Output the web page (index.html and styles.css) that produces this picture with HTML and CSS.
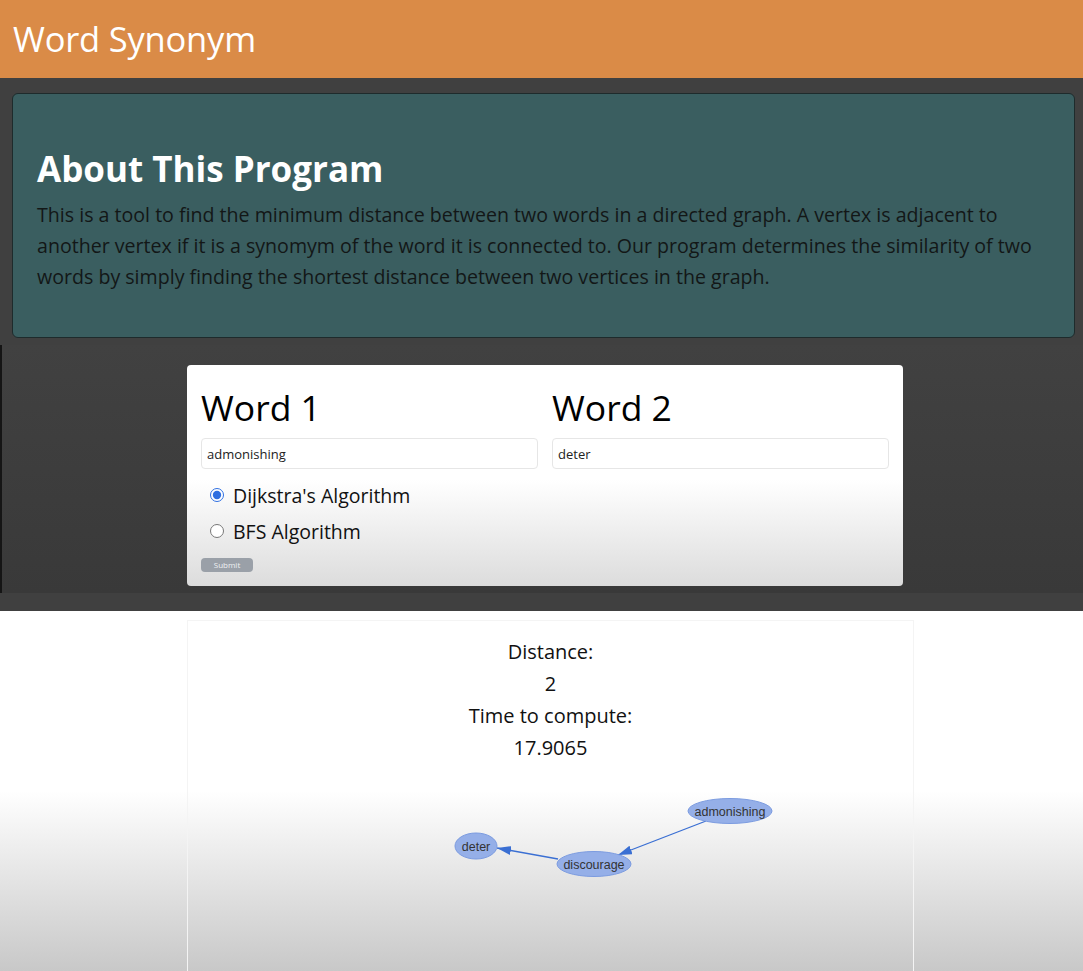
FILE: index.html
```html
<!DOCTYPE html>
<html lang="en">
<head>
<meta charset="utf-8">
<title>Word Synonym</title>
<link rel="stylesheet" href="styles.css">
</head>
<body>
<header class="topbar"><h1 class="brand">Word Synonym</h1></header>
<section class="about">
  <h2 class="about-title">About This Program</h2>
  <p class="about-text">This is a tool to find the minimum distance between two words in a directed graph. A vertex is adjacent to another vertex if it is a synomym of the word it is connected to. Our program determines the similarity of two words by simply finding the shortest distance between two vertices in the graph.</p>
</section>
<section class="panel">
  <form class="card">
    <div class="cols">
      <div class="col">
        <h3 class="word-label">Word 1</h3>
        <input class="word-input" type="text" value="admonishing">
      </div>
      <div class="col">
        <h3 class="word-label">Word 2</h3>
        <input class="word-input" type="text" value="deter">
      </div>
    </div>
    <label class="radio-row"><input type="radio" name="alg" checked> <span>Dijkstra's Algorithm</span></label>
    <label class="radio-row"><input type="radio" name="alg"> <span>BFS Algorithm</span></label>
    <button class="submit" type="button">Submit</button>
  </form>
</section>
<section class="results">
  <div class="result-card">
    <div class="stat">Distance:</div>
    <div class="stat">2</div>
    <div class="stat">Time to compute:</div>
    <div class="stat">17.9065</div>
    <svg class="graph" width="727" height="140" viewBox="0 0 727 140">
      <defs>
        <marker id="arr" markerWidth="14" markerHeight="9" refX="14" refY="4.5" orient="auto" markerUnits="userSpaceOnUse">
          <path d="M0,0 L14,4.5 L0,9 Z" fill="#3a6fd3"/>
        </marker>
      </defs>
      <line x1="518" y1="46" x2="430" y2="80" stroke="#3a6fd3" stroke-width="1.3" marker-end="url(#arr)"/>
      <line x1="370" y1="84" x2="309" y2="73" stroke="#3a6fd3" stroke-width="1.3" marker-end="url(#arr)"/>
      <ellipse cx="542" cy="36" rx="42" ry="12.5" fill="#95afe8" stroke="#7b9be0"/>
      <ellipse cx="406" cy="89" rx="37" ry="12.5" fill="#95afe8" stroke="#7b9be0"/>
      <ellipse cx="288" cy="71" rx="21" ry="13" fill="#95afe8" stroke="#7b9be0"/>
      <text x="542" y="40.5" class="node-text">admonishing</text>
      <text x="406" y="93.5" class="node-text">discourage</text>
      <text x="288" y="75.5" class="node-text">deter</text>
    </svg>
  </div>
</section>
</body>
</html>
```
FILE: styles.css
```css
* { box-sizing: border-box; }
html, body { margin: 0; padding: 0; }
body {
  background: #404040;
  font-family: "Open Sans", "Noto Sans", sans-serif;
  width: 1083px;
  overflow: hidden;
}
.topbar {
  height: 78px;
  background: #da8b47;
  padding-left: 13px;
}
.brand {
  margin: 0;
  color: #fff;
  font-size: 34.5px;
  font-weight: 400;
  line-height: 78px;
  letter-spacing: -0.2px;
}
.about {
  margin: 15px 8px 0 12px;
  height: 245px;
  background: #3a5e60;
  border: 1px solid #1e2b2c;
  border-radius: 6px;
  padding: 52px 24px 0 24px;
}
.about-title {
  margin: 0 0 7px 0;
  color: #fff;
  font-size: 35px;
  font-weight: 700;
  line-height: 46px;
}
.about-text {
  margin: 0;
  color: #131717;
  font-size: 19.6px;
  line-height: 31px;
}
.panel {
  margin-top: 7px;
  border-left: 2px solid #151515;
  background: linear-gradient(#414141, #393939);
  padding: 20px 0 7px 185px;
  margin-bottom: 18px;
}
.card {
  width: 716px;
  height: 221px;
  background: linear-gradient(#ffffff 0%, #ffffff 52%, #dcdcdc 100%);
  border-radius: 4px;
  padding: 20px 14px 0 14px;
}
.cols {
  display: grid;
  grid-template-columns: 337px 337px;
  column-gap: 14px;
}
.word-label {
  margin: 0 0 9px 0;
  font-size: 35.5px;
  font-weight: 400;
  line-height: 44px;
  color: #000;
}
.word-input {
  display: block;
  width: 100%;
  height: 31px;
  border: 1px solid #e6e6e6;
  border-radius: 4px;
  background: #fff;
  font-family: inherit;
  font-size: 13px;
  color: #222;
  padding: 0 5px;
  margin: 0 0 8px 0;
}
.radio-row {
  display: flex;
  align-items: center;
  gap: 9px;
  height: 36px;
  padding-left: 9px;
  font-size: 19.5px;
  color: #111;
}
.radio-row input {
  margin: 0;
  width: 14px;
  height: 14px;
  accent-color: #2f6fe0;
}
.submit {
  margin-top: 9px;
  display: block;
  width: 52px;
  height: 14px;
  padding: 0;
  border: none;
  border-radius: 4px;
  background: #9aa0a8;
  color: #eef0f3;
  font-family: inherit;
  font-size: 8px;
  line-height: 14px;
}
.results {
  background: linear-gradient(#ffffff 0%, #ffffff 50%, #c8c8c8 100%);
  height: 360px;
  padding: 9px 0 0 187px;
}
.result-card {
  width: 727px;
  height: 351px;
  border: 1px solid #f4f4f4;
  border-bottom: none;
  padding-top: 15px;
  text-align: center;
}
.stat {
  font-size: 20px;
  line-height: 32px;
  color: #111;
}
.graph {
  display: block;
  margin-top: 11px;
}
.node-text {
  font-family: "Liberation Sans", Arial, sans-serif;
  font-size: 12.5px;
  fill: #333;
  text-anchor: middle;
}
```
